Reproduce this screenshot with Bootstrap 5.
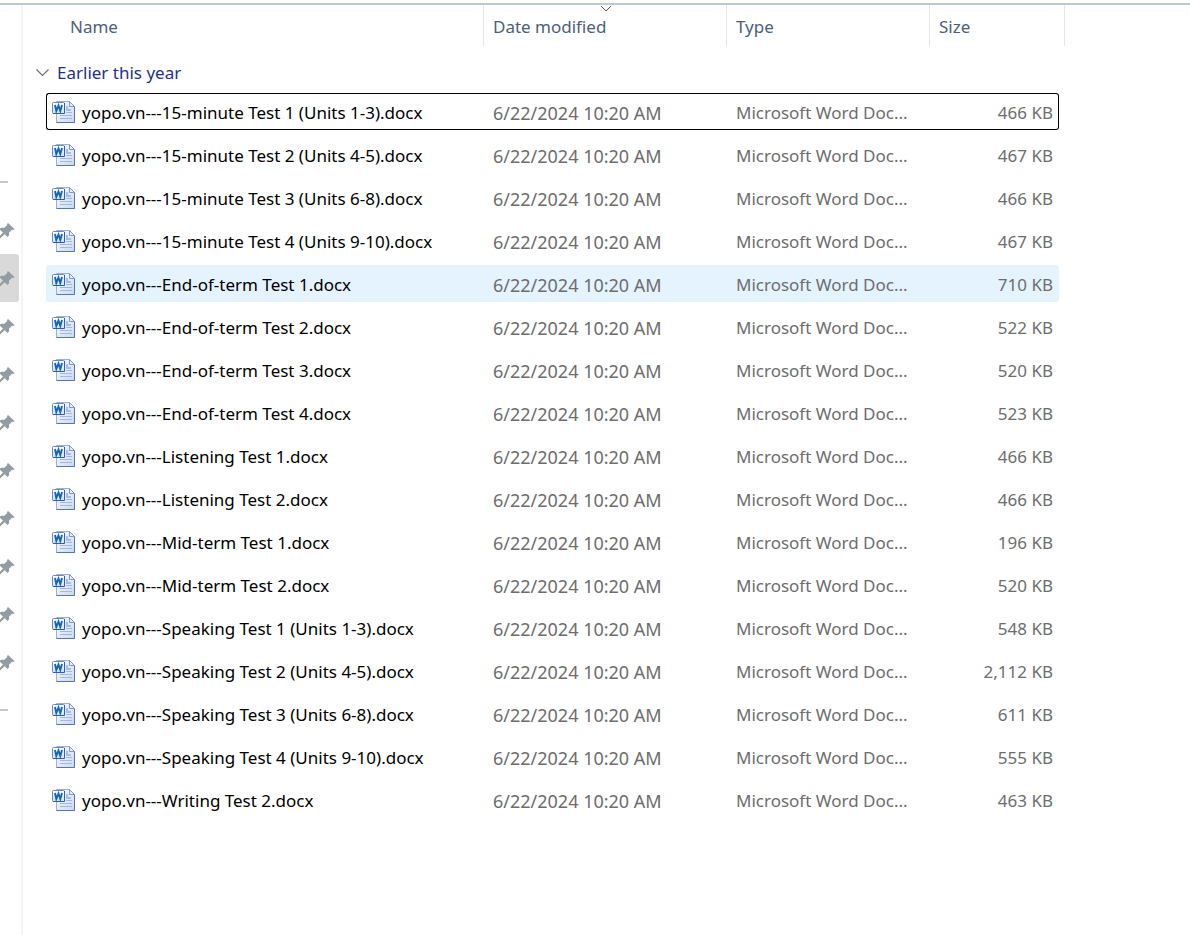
<!DOCTYPE html>
<html lang="en">
<head>
<meta charset="utf-8">
<meta name="viewport" content="width=device-width, initial-scale=1">
<title>File list</title>
<link rel="stylesheet" href="https://cdn.jsdelivr.net/npm/bootstrap@5.3.0/dist/css/bootstrap.min.css">
<style>
  body { font-family: "Noto Sans", "Open Sans", sans-serif; font-size: 17px; line-height: 24px; color: #000; background: #fff; }
  .topline { height: 2px; margin-top: 3px; background: #bccad7; }
  .side { width: 23px; border-right: 2px solid #f5f5f5; padding-top: 176px; }
  .side hr { width: 8px; height: 2px; margin: 0; border: 0; background: #c8c8c8; opacity: 1; }
  .side ul { margin: 23px 0; }
  .pin { width: 19px; height: 48px; padding: 1px 0 0; border: 0; background: none; border-radius: 0 3px 3px 0; text-align: left; display: flex; align-items: center; }
  .pin.current { background: #d9d9d9; }
  .pane { padding: 0 125px 0 23px; }
  .files { width: 100%; table-layout: fixed; border-collapse: separate; border-spacing: 0 6px; margin-top: -6px; white-space: nowrap; }
  .files th { height: 41px; font-weight: 400; color: #4c607a; padding: 2px 0 0 9px; border-right: 1px solid #e5e5e5; position: relative; }
  .files th:first-child { padding-left: 24px; }
  .files button { border: 0; background: none; padding: 0; color: inherit; }
  .sortmark { position: absolute; top: 0; left: 50%; margin-left: -5px; }
  .files .group td { height: 35px; padding: 6px 0 0; color: #1e3287; }
  .group button { margin-left: -10px; }
  .files .file td { height: 37px; padding: 3px 0 0 9px; border: 1px solid transparent; border-width: 1px 0; color: #6d6d6d; overflow: hidden; text-overflow: ellipsis; }
  .files .file td:first-child { padding: 0 0 0 5px; border-left-width: 1px; border-radius: 3px 0 0 3px; color: #000; }
  .files .file td.size { padding: 3px 5px 0 0; border-right-width: 1px; border-radius: 0 3px 3px 0; text-align: right; }
  .files .file td.date { font-size: 18px; }
  .files .focused td { border-color: #000; }
  .files .hovered td { background: #e5f3ff; }
  .label { padding-top: 3px; margin-left: 6px; }
  .c-date { width: 243px; } .c-type { width: 203px; } .c-size { width: 129px; } .c-end { width: 6px; }
</style>
</head>
<body class="d-flex flex-column min-vh-100">
<svg width="0" height="0" class="position-absolute" aria-hidden="true">
  <defs>
    <linearGradient id="paper" x1="0" y1="0" x2="1" y2="1"><stop offset="0" stop-color="#fafcff"/><stop offset="1" stop-color="#c9d9f2"/></linearGradient>
    <linearGradient id="tile" x1="0" y1="0" x2="0" y2="1"><stop offset="0" stop-color="#fff"/><stop offset="1" stop-color="#cfe3f8"/></linearGradient>
    <symbol id="doc" viewBox="0 0 24 24">
      <path d="M4.500 1.500H17.500L22.500 6.500V22.500H4.500Z" fill="url(#paper)" stroke="#9eb1d4"/>
      <path d="M22.500 6.500V22.500H4.500" fill="none" stroke="#5876ad"/>
      <path d="M17.500 1.500V6.500H22.500Z" fill="#e6eefa" stroke="#8196ba"/>
      <path d="M14 6h2v5h-2zM14 9h5v2h-5z" fill="#a9bedf"/>
      <path d="M14 12.500h6M8 15.500h12M8 18.500h12" stroke="#a3b8dc"/>
      <rect x=".5" y="2.500" width="12" height="11" rx="1" fill="url(#tile)" stroke="#6389c5"/>
      <path d="M12.500 3v10.500H1" fill="none" stroke="#315eaf"/>
      <path d="M3 5l1.300 6L6.500 5.500 8.300 11 10 5" fill="none" stroke="#1764bd" stroke-width="1.900"/>
    </symbol>
    <symbol id="pin" viewBox="0 0 15 18">
      <path d="M8 1L14.500 7 13.500 8 12 7.700 9 10.700 9 13.500 7.500 15 4.700 12.200 0 16.500V13.800L3 10.500 0 7.700V6.500L1.500 5.700H4.200L7.300 3 7 2Z" fill="#929da3"/>
    </symbol>
  </defs>
</svg>
<div class="topline"></div>
<div class="d-flex flex-grow-1">
  <nav class="side flex-shrink-0" aria-label="Quick access">
    <hr><ul class="list-unstyled" id="pins"></ul><hr>
  </nav>
  <main class="pane flex-grow-1">
    <table class="files">
      <colgroup><col><col class="c-date"><col class="c-type"><col class="c-size"><col class="c-end"></colgroup>
      <thead>
        <tr>
          <th scope="col"><button type="button">Name</button></th>
          <th scope="col"><svg class="sortmark" width="12" height="8" viewBox="0 0 12 8"><path d="M1 1l5 5 5-5" fill="none" stroke="#555"/></svg><button type="button">Date modified</button></th>
          <th scope="col"><button type="button">Type</button></th>
          <th scope="col" colspan="2"><button type="button">Size</button></th>
        </tr>
      </thead>
      <tbody id="rows">
        <tr class="group"><td colspan="5"><button type="button" class="d-flex align-items-center gap-2" aria-expanded="true"><svg width="13" height="8" viewBox="0 0 13 8"><path d="M.5.500l6 6 6-6" fill="none" stroke="#707070" stroke-width="1.200"/></svg>Earlier this year</button></td></tr>
      </tbody>
    </table>
  </main>
</div>
<script>
  const files = [
    ["15-minute Test 1 (Units 1-3)", "466", "focused"],
    ["15-minute Test 2 (Units 4-5)", "467"],
    ["15-minute Test 3 (Units 6-8)", "466"],
    ["15-minute Test 4 (Units 9-10)", "467"],
    ["End-of-term Test 1", "710", "hovered"],
    ["End-of-term Test 2", "522"],
    ["End-of-term Test 3", "520"],
    ["End-of-term Test 4", "523"],
    ["Listening Test 1", "466"],
    ["Listening Test 2", "466"],
    ["Mid-term Test 1", "196"],
    ["Mid-term Test 2", "520"],
    ["Speaking Test 1 (Units 1-3)", "548"],
    ["Speaking Test 2 (Units 4-5)", "2,112"],
    ["Speaking Test 3 (Units 6-8)", "611"],
    ["Speaking Test 4 (Units 9-10)", "555"],
    ["Writing Test 2", "463"]
  ];
  document.getElementById("rows").insertAdjacentHTML("beforeend", files.map(([name, size, state = ""]) =>
    `<tr class="file ${state}"><td><div class="d-flex align-items-center"><svg width="24" height="24" class="flex-shrink-0"><use href="#doc"/></svg><span class="label">yopo.vn---${name}.docx</span></div></td><td class="date">6/22/2024 10:20 AM</td><td>Microsoft Word Doc...</td><td class="size">${size} KB</td></tr>`).join(""));
  document.getElementById("pins").innerHTML = Array.from({ length: 10 }, (_, i) =>
    `<li><button type="button" class="pin${i === 1 ? " current" : ""}" aria-label="Pinned folder ${i + 1}"><svg width="15" height="18"><use href="#pin"/></svg></button></li>`).join("");
</script>
<script src="https://cdn.jsdelivr.net/npm/bootstrap@5.3.0/dist/js/bootstrap.bundle.min.js"></script>
</body>
</html>
